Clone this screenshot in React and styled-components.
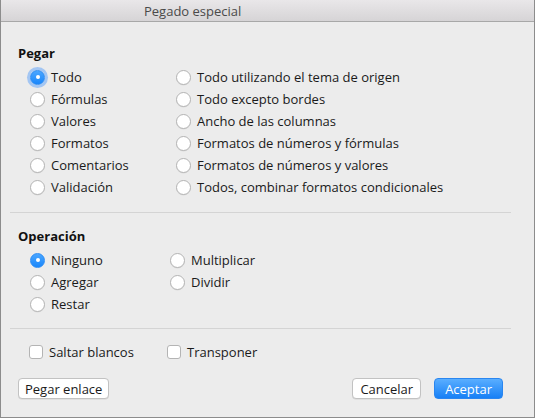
import React from "react";
import styled, { createGlobalStyle } from "styled-components";

const GlobalStyle = createGlobalStyle`
  html, body {
    margin: 0;
    padding: 0;
    background: #ececec;
  }
  body {
    font-family: "Open Sans", "Noto Sans", sans-serif;
    -webkit-font-smoothing: antialiased;
  }
`;

const Window = styled.div`
  width: 535px;
  height: 418px;
  box-sizing: border-box;
  border: 1px solid #8c8c8c;
  border-top: none;
  background: #ececec;
  display: flex;
  flex-direction: column;
  overflow: hidden;
`;

const TitleBar = styled.div`
  height: 22px;
  flex: none;
  box-sizing: border-box;
  border-bottom: 1px solid #a8a8a8;
  background: linear-gradient(#e9e7e9, #d6d4d6);
  display: flex;
  align-items: center;
  padding-left: 143px;
  font-size: 13px;
  color: #4a4a4a;
`;

const Body = styled.div`
  flex: 1;
  display: flex;
  flex-direction: column;
  padding: 0 23px 0 8px;
`;

const Section = styled.section`
  padding: ${(p) => p.$pad};
  padding-left: 9px;
`;

const Heading = styled.div`
  font-size: 13px;
  font-weight: 700;
  color: #111;
  height: 18px;
  line-height: 18px;
  margin-bottom: 4px;
`;

const OptionGrid = styled.div`
  display: grid;
  grid-template-columns: ${(p) => p.$cols};
  grid-auto-flow: column;
  grid-template-rows: repeat(${(p) => p.$rows}, 22px);
  padding-left: 12px;
  margin-right: -20px;
`;

const Option = styled.label`
  display: flex;
  align-items: center;
  gap: 6px;
  font-size: 13px;
  color: #1a1a1a;
  white-space: nowrap;
`;

const Radio = styled.span`
  width: 15px;
  height: 15px;
  flex: none;
  box-sizing: border-box;
  border-radius: 50%;
  position: relative;
  ${(p) =>
    p.$on
      ? `
    background: linear-gradient(#4aa6ff, #1a87fb);
    border: 1px solid #2b8cf5;
    box-shadow: ${p.$focus ? "0 0 0 3px rgba(90, 160, 250, 0.5)" : "none"};
    &::after {
      content: "";
      position: absolute;
      left: 4.5px;
      top: 4.5px;
      width: 4px;
      height: 4px;
      border-radius: 50%;
      background: #fff;
    }
  `
      : `
    background: #fff;
    border: 1px solid #b4b4b4;
    box-shadow: 0 0.5px 0.5px rgba(0,0,0,0.08);
  `}
`;

const Rule = styled.div`
  height: 1px;
  background: #d4d4d4;
  margin-left: 1px;
`;

const CheckRow = styled.div`
  display: flex;
  padding: 12px 0 0 20px;
  height: 22px;
  align-items: center;
`;

const CheckOption = styled(Option)`
  width: ${(p) => p.$w}px;
  gap: 6px;
`;

const Box = styled.span`
  width: 14px;
  height: 14px;
  flex: none;
  box-sizing: border-box;
  border: 1px solid #b4b4b4;
  border-radius: 3px;
  background: #fff;
`;

const Footer = styled.div`
  display: flex;
  align-items: center;
  padding: 15px 8px 0 9px;
  gap: 13px;
`;

const Spacer = styled.div`
  flex: 1;
`;

const Button = styled.button`
  height: 21px;
  box-sizing: border-box;
  padding: 0 ${(p) => p.$px}px;
  font-family: inherit;
  font-size: 13px;
  border-radius: 4px;
  ${(p) =>
    p.$primary
      ? `
    color: #fff;
    border: 1px solid #2a86f0;
    background: linear-gradient(#5aaeff, #1780f6);
  `
      : `
    color: #1a1a1a;
    border: 1px solid #c2c2c2;
    background: #fff;
    box-shadow: 0 0.5px 0.5px rgba(0,0,0,0.1);
  `}
`;

const pasteLeft = ["Todo", "Fórmulas", "Valores", "Formatos", "Comentarios", "Validación"];
const pasteRight = [
  "Todo utilizando el tema de origen",
  "Todo excepto bordes",
  "Ancho de las columnas",
  "Formatos de números y fórmulas",
  "Formatos de números y valores",
  "Todos, combinar formatos condicionales",
];
const ops = ["Ninguno", "Agregar", "Restar", "Multiplicar", "Dividir"];

export default function App() {
  return (
    <>
      <GlobalStyle />
      <Window>
        <TitleBar>Pegado especial</TitleBar>
        <Body>
          <Section $pad="22px 0 14px">
            <Heading>Pegar</Heading>
            <OptionGrid $cols="146px 1fr" $rows={6}>
              {[...pasteLeft, ...pasteRight].map((t, i) => (
                <Option key={t}>
                  <Radio $on={i === 0} $focus={i === 0} />
                  {t}
                </Option>
              ))}
            </OptionGrid>
          </Section>
          <Rule />
          <Section $pad="14px 0 13px">
            <Heading>Operación</Heading>
            <OptionGrid $cols="140px 1fr" $rows={3}>
              {ops.map((t, i) => (
                <Option key={t}>
                  <Radio $on={i === 0} />
                  {t}
                </Option>
              ))}
            </OptionGrid>
          </Section>
          <Rule />
          <CheckRow>
            <CheckOption $w={138}>
              <Box />
              Saltar blancos
            </CheckOption>
            <CheckOption $w={120}>
              <Box />
              Transponer
            </CheckOption>
          </CheckRow>
          <Footer>
            <Button $px={6}>Pegar enlace</Button>
            <Spacer />
            <Button $px={7}>Cancelar</Button>
            <Button $px={10} $primary>
              Aceptar
            </Button>
          </Footer>
        </Body>
      </Window>
    </>
  );
}
